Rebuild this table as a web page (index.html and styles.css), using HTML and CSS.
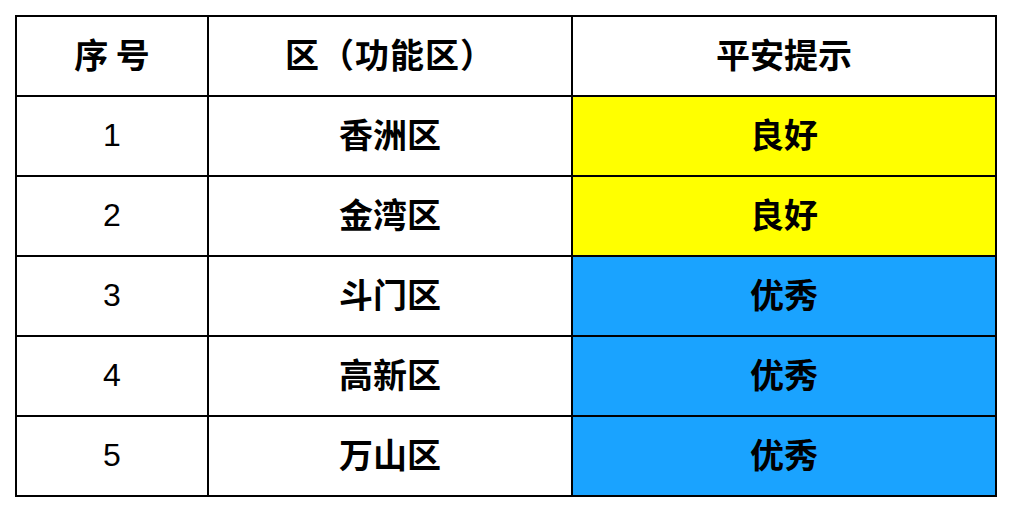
FILE: index.html
```html
<!DOCTYPE html>
<html lang="zh">
<head>
<meta charset="utf-8">
<link rel="stylesheet" href="styles.css">
</head>
<body>
<table class="grid">
  <colgroup>
    <col class="c1"><col class="c2"><col class="c3">
  </colgroup>
  <thead>
    <tr><th>序 号</th><th>区（功能区）</th><th>平安提示</th></tr>
  </thead>
  <tbody>
    <tr><td class="num">1</td><td>香洲区</td><td class="good">良好</td></tr>
    <tr><td class="num">2</td><td>金湾区</td><td class="good">良好</td></tr>
    <tr><td class="num">3</td><td>斗门区</td><td class="best">优秀</td></tr>
    <tr><td class="num">4</td><td>高新区</td><td class="best">优秀</td></tr>
    <tr><td class="num">5</td><td>万山区</td><td class="best">优秀</td></tr>
  </tbody>
</table>
</body>
</html>
```
FILE: styles.css
```css
html, body {
  margin: 0;
  padding: 0;
  background: #ffffff;
}
body {
  padding: 15px 0 0 15px;
  font-family: "Noto Sans CJK SC", "Liberation Sans", sans-serif;
  color: #000;
}
.grid {
  border-collapse: separate;
  border-spacing: 0;
  table-layout: fixed;
  width: 982px;
  border-left: 2px solid #000;
  border-top: 2px solid #000;
}
.c1 { width: 192px; }
.c2 { width: 364px; }
.c3 { width: 424px; }
.grid th, .grid td {
  height: 74px;
  padding: 0 0 4px 0;
  border-right: 2px solid #000;
  border-bottom: 2px solid #000;
  text-align: center;
  vertical-align: middle;
  font-size: 34px;
  font-weight: 700;
  line-height: 1;
}
.grid th:nth-child(2) {
  letter-spacing: 1px;
}
.grid td.num {
  font-family: "Liberation Sans", sans-serif;
  font-size: 32px;
  font-weight: 400;
  padding-bottom: 2px;
  height: 76px;
}
.good { background: #ffff00; }
.best { background: #1aa3ff; }
```
